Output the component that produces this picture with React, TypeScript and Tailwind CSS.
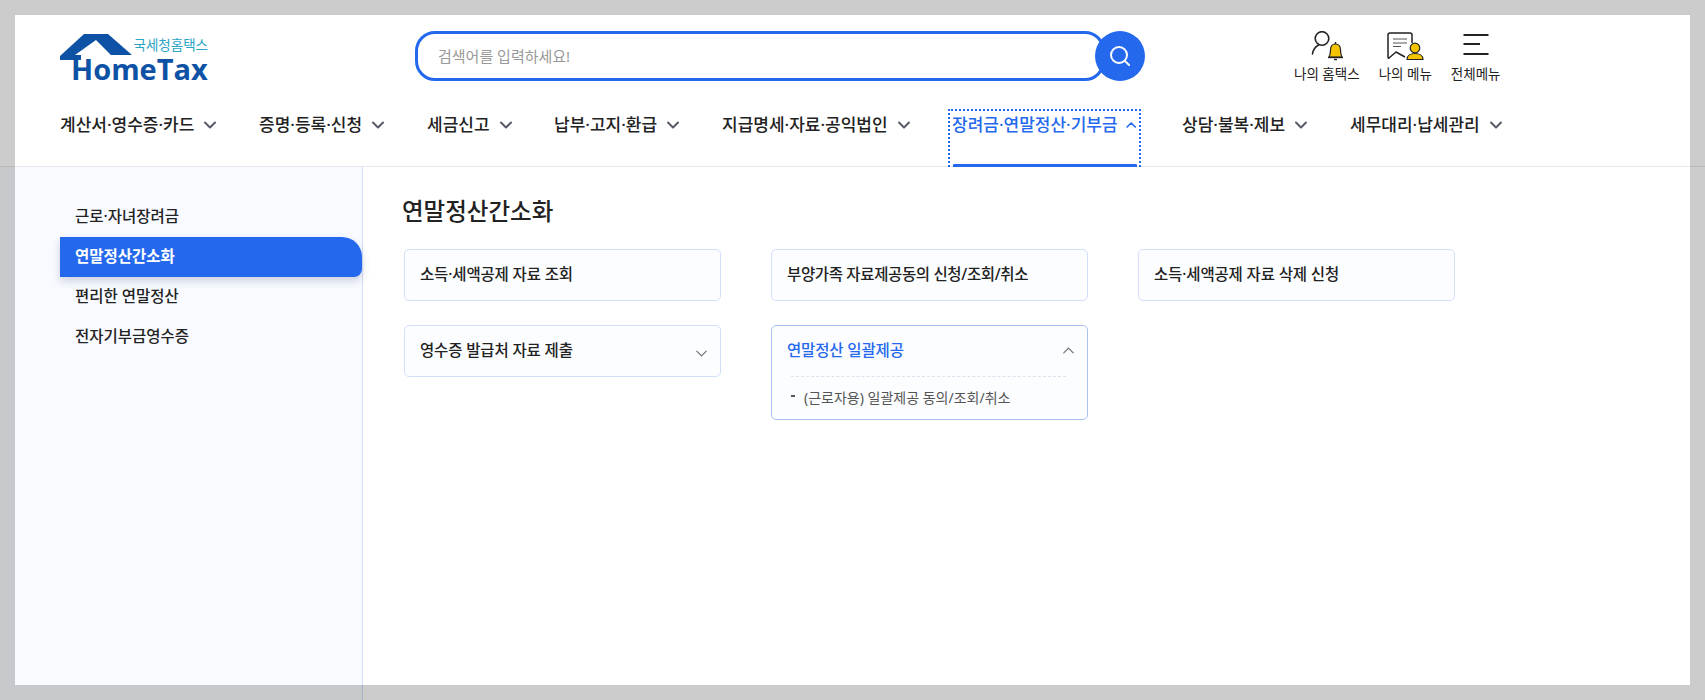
import type { ReactNode } from "react";
import { ChevronDown, ChevronUp, Search } from "lucide-react";

const navItems = [
  { label: "계산서·영수증·카드", width: "w-[199px]" },
  { label: "증명·등록·신청", width: "w-[168px]" },
  { label: "세금신고", width: "w-[127px]" },
  { label: "납부·고지·환급", width: "w-[168px]" },
  { label: "지급명세·자료·공익법인", width: "w-[226px]" },
];

const navItemsAfter = [
  { label: "상담·불복·제보", width: "w-[168px]" },
  { label: "세무대리·납세관리", width: "w-[180px]" },
];

const sideItems = ["근로·자녀장려금", "연말정산간소화", "편리한 연말정산", "전자기부금영수증"];

function Logo() {
  return (
    <div className="relative w-[150px] h-[50px]">
      <svg className="absolute left-0 top-0" width="150" height="50" viewBox="0 0 150 50">
        <path d="M24 3H48L72 24H51L36 9L15 24H21V29H0V25Z" fill="#0e52a5" />
      </svg>
      <span className="absolute right-[2px] top-[5px] text-[13.500px] leading-[18px] text-[#2aa5c4]">국세청홈택스</span>
      <span className="absolute left-[11px] top-[26px] font-['Open_Sans',sans-serif] text-[29px] leading-[24px] font-bold text-[#0e52a5]">
        HomeTax
      </span>
    </div>
  );
}

function PersonBell() {
  return (
    <svg width="34" height="30" viewBox="0 0 34 30" fill="none">
      <circle cx="12" cy="7.500" r="6.800" stroke="#222" strokeWidth="1.600" />
      <path d="M2.500 23C3 19 5 16 8.500 14" stroke="#222" strokeWidth="1.600" strokeLinecap="round" />
      <path d="M19 26C20 24 20.500 22 20.500 19C20.500 15 22.500 13 25.500 13C28.500 13 30.500 15 30.500 19C30.500 22 31 24 32 26Z" fill="#f5c400" stroke="#222" strokeWidth="1.200" />
      <path d="M18 26.500H33" stroke="#222" strokeWidth="1.400" />
      <path d="M24 28.500H27" stroke="#222" strokeWidth="1.400" />
      <path d="M25.500 13V11" stroke="#222" strokeWidth="1.400" />
    </svg>
  );
}

function MessagePerson() {
  return (
    <svg width="38" height="30" viewBox="0 0 38 30" fill="none">
      <path d="M19 26L10 21L3 27C2.500 27.300 2 27 2 26V4C2 2.800 2.800 2 4 2H24C25.200 2 26 2.800 26 4V12" stroke="#222" strokeWidth="1.500" strokeLinejoin="round" />
      <path d="M7 8H21M7 12H21M7 15.500H15" stroke="#555" strokeWidth="1.200" />
      <circle cx="29" cy="17" r="4.800" fill="#f5c400" stroke="#222" strokeWidth="1.200" />
      <path d="M21 28.500C21 25 24 22.500 29 22.500C34 22.500 37 25 37 28.500Z" fill="#f5c400" stroke="#222" strokeWidth="1.200" />
    </svg>
  );
}

function MenuLines() {
  return (
    <svg width="26" height="30" viewBox="0 0 26 30" fill="none">
      <path d="M0.500 4H25.500M0.500 13H17M0.500 23H25.500" stroke="#222" strokeWidth="2" />
    </svg>
  );
}

function QuickLink({ label, icon }: { label: string; icon: ReactNode }) {
  return (
    <div className="flex flex-col items-center">
      <div className="h-[30px] flex items-center justify-center">{icon}</div>
      <span className="mt-[4px] text-[13.500px] leading-[18px] text-[#222]">{label}</span>
    </div>
  );
}

function NavItem({ label, width }: { label: string; width: string }) {
  return (
    <div className={`${width} flex items-center gap-[6px] shrink-0`}>
      <span className="text-[17px] leading-[24px] font-medium text-[#222]">{label}</span>
      <ChevronDown className="w-[20px] h-[20px] text-[#555a66]" strokeWidth={2.400} />
    </div>
  );
}

function Card({ label, tight }: { label: string; tight?: boolean }) {
  return (
    <div className="w-[317px] h-[52px] px-[15px] pb-[1px] flex items-center justify-between bg-[#fcfdff] border border-[#d3e0fb] rounded-[5px]">
      <span className={`text-[15.500px] font-medium text-[#222] ${tight ? "tracking-[-0.35px]" : "tracking-[-0.15px]"}`}>
        {label}
      </span>
    </div>
  );
}

export default function App() {
  return (
    <div className="relative w-[1705px] h-[700px] overflow-hidden bg-white font-['Noto_Sans','Noto_Sans_CJK_KR',sans-serif]">
      <header className="h-[167px] border-b border-[#e6e8ec] pl-[60px]">
        <div className="flex items-start h-[109px] pt-[31px]">
          <Logo />
          <div className="ml-[205px] flex">
            <div className="w-[690px] h-[50px] border-[3px] border-[#2468ee] rounded-[20px] pl-[20px] flex items-center">
              <span className="text-[15px] text-[#999]">검색어를 입력하세요!</span>
            </div>
            <div className="-ml-[10px] w-[50px] h-[50px] rounded-full bg-[#2468ee] flex items-center justify-center">
              <Search className="w-[24px] h-[24px] text-white" strokeWidth={2} />
            </div>
          </div>
          <div className="ml-[149px] flex gap-[19px]">
            <QuickLink label="나의 홈택스" icon={<PersonBell />} />
            <QuickLink label="나의 메뉴" icon={<MessagePerson />} />
            <QuickLink label="전체메뉴" icon={<MenuLines />} />
          </div>
        </div>
        <nav className="flex h-[58px] items-start">
          {navItems.map((item) => (
            <div key={item.label} className="pt-[4px]">
              <NavItem label={item.label} width={item.width} />
            </div>
          ))}
          <div className="relative w-[193px] h-[58px] mr-[41px] shrink-0 border-2 border-dotted border-[#2468ee] border-b-0 pl-[2px] pt-[2px]">
            <div className="flex items-center gap-[5px] whitespace-nowrap">
              <span className="text-[17px] leading-[24px] font-medium text-[#2468ee]">장려금·연말정산·기부금</span>
              <ChevronUp className="w-[22px] h-[22px] text-[#2468ee]" strokeWidth={2.400} />
            </div>
            <div className="absolute left-[3px] right-[2px] bottom-0 h-[3px] bg-[#2468ee] rounded-t-[1px]" />
          </div>
          {navItemsAfter.map((item) => (
            <div key={item.label} className="pt-[4px]">
              <NavItem label={item.label} width={item.width} />
            </div>
          ))}
        </nav>
      </header>

      <main className="flex h-[533px]">
        <aside className="w-[363px] shrink-0 bg-[#f8faff] border-r border-[#d3e0fb] pl-[60px] pt-[30px]">
          {sideItems.map((item, index) =>
            index === 1 ? (
              <div
                key={item}
                className="h-[40px] pl-[15px] pb-[1px] flex items-center text-[15.500px] font-bold text-white bg-[#2468ee] rounded-tr-[20px] rounded-br-[8px] shadow-[0_4px_8px_rgba(30,50,100,0.2)]"
              >
                {item}
              </div>
            ) : (
              <div key={item} className="h-[40px] pl-[15px] pb-[1px] flex items-center text-[15.500px] font-medium text-[#222]">
                {item}
              </div>
            ),
          )}
        </aside>
        <section className="pl-[39px] pt-[28px]">
          <h2 className="text-[23.500px] leading-[32px] font-medium text-[#222]">연말정산간소화</h2>
          <div className="mt-[22px] ml-[2px] flex gap-[50px]">
            <Card label="소득·세액공제 자료 조회" />
            <Card label="부양가족 자료제공동의 신청/조회/취소" tight />
            <Card label="소득·세액공제 자료 삭제 신청" />
          </div>
          <div className="mt-[24px] ml-[2px] flex items-start gap-[50px]">
            <div className="w-[317px] h-[52px] px-[15px] flex items-center justify-between bg-[#fcfdff] border border-[#d3e0fb] rounded-[5px]">
              <span className="mb-[1px] text-[15.500px] tracking-[-0.15px] font-medium text-[#222]">영수증 발급처 자료 제출</span>
              <ChevronDown className="w-[19px] h-[19px] mt-[4px] -mr-[6px] text-[#666]" strokeWidth={1.300} />
            </div>
            <div className="w-[317px] h-[95px] px-[15px] bg-[#fcfdff] border border-[#a9c2f3] rounded-[5px]">
              <div className="h-[50px] flex items-center justify-between">
                <span className="mb-[1px] text-[15.500px] tracking-[-0.15px] font-medium text-[#2468ee]">연말정산 일괄제공</span>
                <ChevronUp className="w-[19px] h-[19px] -mr-[6px] -mt-[2px] text-[#666]" strokeWidth={1.300} />
              </div>
              <div className="ml-[4px] mr-[6px] border-t border-dashed border-[#dde3ee]" />
              <div className="mt-[11px] flex items-center gap-[9px] pl-[4px] text-[14px] leading-[20px] text-[#555]">
                <span className="w-[4px] h-[2px] mb-[4px] bg-[#555] shrink-0" />
                (근로자용) 일괄제공 동의/조회/취소
              </div>
            </div>
          </div>
        </section>
      </main>

      <div className="absolute inset-0 border-[15px] border-[rgba(0,0,0,0.2)] pointer-events-none" />
    </div>
  );
}
